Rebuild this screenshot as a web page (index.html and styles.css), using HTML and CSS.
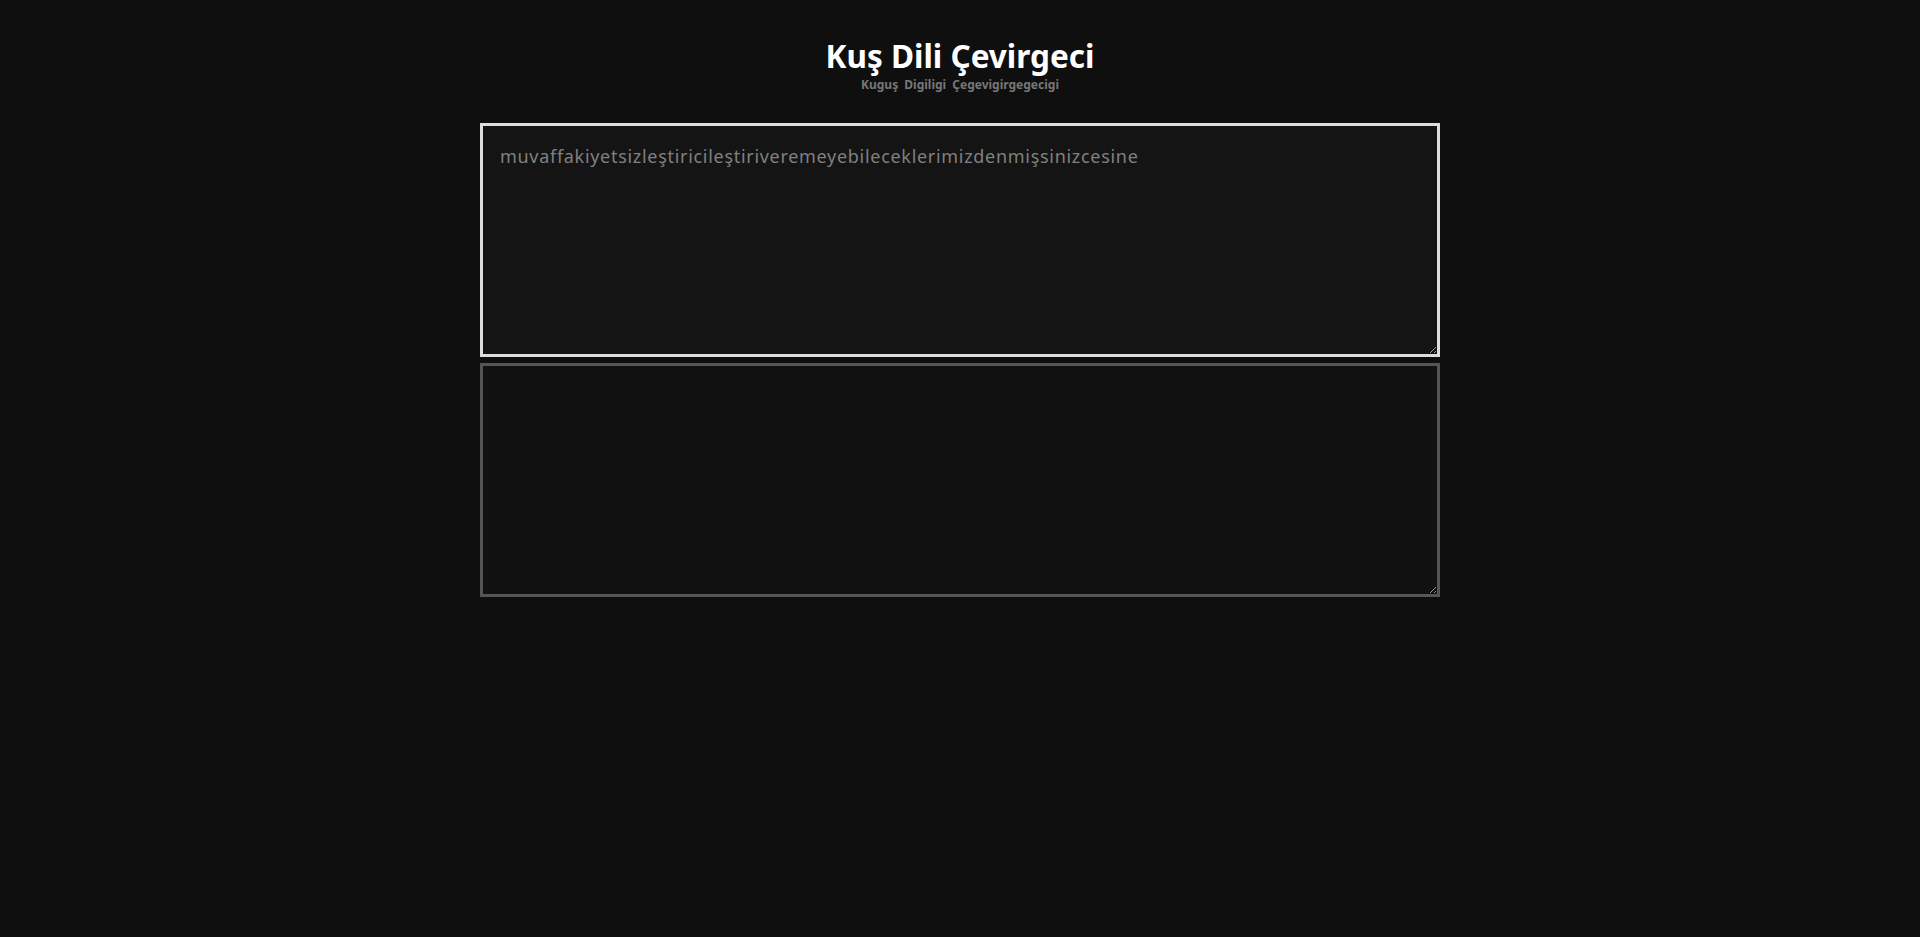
FILE: index.html
```html
<!DOCTYPE html>
<html lang="tr">
<head>
<meta charset="utf-8">
<title>Kuş Dili Çevirgeci</title>
<link rel="stylesheet" href="styles.css">
</head>
<body>
<header class="header">
  <h1 class="title">Kuş Dili Çevirgeci</h1>
  <p class="subtitle">Kuguş Digiligi Çegevigirgegecigi</p>
</header>
<main class="main">
  <textarea class="box box-input" placeholder="muvaffakiyetsizleştiricileştiriveremeyebileceklerimizdenmişsinizcesine"></textarea>
  <textarea class="box box-output" readonly></textarea>
</main>
</body>
</html>
```

FILE: styles.css
```css
html, body {
  margin: 0;
  padding: 0;
  background: #0f0f0f;
  font-family: "Comic Sans MS", "Noto Sans", sans-serif;
}
.header {
  text-align: center;
  padding-top: 36px;
}
.title {
  margin: 0;
  color: #ffffff;
  font-size: 31.5px;
  font-weight: 700;
  line-height: 40px;
}
.subtitle {
  margin: 2px 0 0;
  color: #777777;
  font-size: 12px;
  font-weight: 700;
  line-height: 14px;
  word-spacing: 3px;
}
.main {
  width: 960px;
  margin: 31px auto 0;
  display: flex;
  flex-direction: column;
  gap: 6px;
}
.box {
  box-sizing: border-box;
  width: 960px;
  height: 234px;
  padding: 17px 17px;
  margin: 0;
  border: 3px solid #555555;
  background: #111111;
  color: #cccccc;
  font-family: "Comic Sans MS", "Noto Sans", sans-serif;
  font-size: 18px;
  letter-spacing: 0.7px;
  line-height: 26px;
  outline: none;
  resize: vertical;
}
.box-input {
  border-color: #dddddd;
  background: #141414;
}
.box::placeholder {
  color: #808080;
}
```
